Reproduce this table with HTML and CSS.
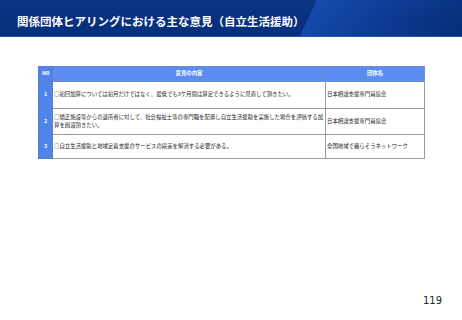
FILE: index.html
```html
<!DOCTYPE html>
<html lang="ja">
<head>
<meta charset="utf-8">
<link rel="stylesheet" href="styles.css">
</head>
<body>
<div class="page">
  <header class="band">
    <h1 class="title">関係団体ヒアリングにおける主な意見（自立生活援助）</h1>
  </header>
  <main class="content">
    <table class="opinions">
      <colgroup>
        <col class="c-no">
        <col class="c-text">
        <col class="c-org">
      </colgroup>
      <thead>
        <tr class="head-row">
          <th class="no">No</th>
          <th>意見の内容</th>
          <th>団体名</th>
        </tr>
      </thead>
      <tbody>
        <tr class="r1">
          <td class="no">1</td>
          <td>○初回加算については初月だけではなく、最低でも3ケ月間は算定できるように見直して頂きたい。</td>
          <td>日本相談支援専門員協会</td>
        </tr>
        <tr class="r2">
          <td class="no">2</td>
          <td>○矯正施設等からの退所者に対して、社会福祉士等の専門職を配置し自立生活援助を実施した場合を評価する加算を創設頂きたい。</td>
          <td>日本相談支援専門員協会</td>
        </tr>
        <tr class="r3">
          <td class="no">3</td>
          <td>○自立生活援助と地域定着支援のサービスの段差を解消する必要がある。</td>
          <td>全国地域で暮らそうネットワーク</td>
        </tr>
      </tbody>
    </table>
  </main>
  <footer class="foot">119</footer>
</div>
</body>
</html>
```

FILE: styles.css
```css
html, body {
  margin: 0;
  padding: 0;
  background: #ffffff;
}
.page {
  width: 462px;
  height: 320px;
  display: flex;
  flex-direction: column;
  font-family: "Noto Sans CJK JP", "Noto Sans", sans-serif;
}
.band {
  height: 37px;
  box-sizing: border-box;
  display: flex;
  align-items: center;
  padding: 7px 0 0 17px;
  background:
    linear-gradient(115deg, rgba(0,0,0,0) 0%, rgba(0,0,0,0) 66%, rgba(30,90,200,0.6) 66.3%, rgba(20,80,190,0.3) 82%, rgba(0,0,0,0.05) 100%),
    linear-gradient(180deg, #0b3585 0%, #07307e 60%, #06317f 100%);
  border-bottom: 1px solid #2a58b0;
}
.title {
  margin: 0;
  color: #ffffff;
  font-size: 11.5px;
  font-weight: 700;
  letter-spacing: 0;
  line-height: 1;
}
.content {
  padding: 29px 0 0 38px;
}
.opinions {
  border-collapse: collapse;
  table-layout: fixed;
  width: 386px;
  font-size: 5.4px;
  line-height: 1.35;
  color: #222;
}
.c-no { width: 14px; }
.c-text { width: 273px; }
.c-org { width: 99px; }
.opinions th, .opinions td {
  border: 1px solid #9a9a9a;
  padding: 0 1px;
  text-align: left;
  vertical-align: middle;
}
.opinions td + td {
  border-left: 1px solid #777;
}
.head-row th {
  background: #5a8def;
  color: #ffffff;
  font-weight: 700;
  text-align: center;
  height: 14px;
  border-color: #6f8fc8;
}
.opinions th.no, .opinions td.no {
  background: #4f84ea;
  color: #ffffff;
  text-align: center;
  font-weight: 700;
  border-color: #5b7fc2;
}
.opinions tr.head-row th.no {
  text-align: left;
  padding-left: 3px;
}
.r1 td { height: 26px; }
.r2 td { height: 25px; }
.r3 td { height: 23px; }
.foot {
  margin-top: auto;
  padding: 0 20px 14px 0;
  text-align: right;
  font-size: 10px;
  color: #222;
  font-family: "DejaVu Sans", sans-serif;
}
```
